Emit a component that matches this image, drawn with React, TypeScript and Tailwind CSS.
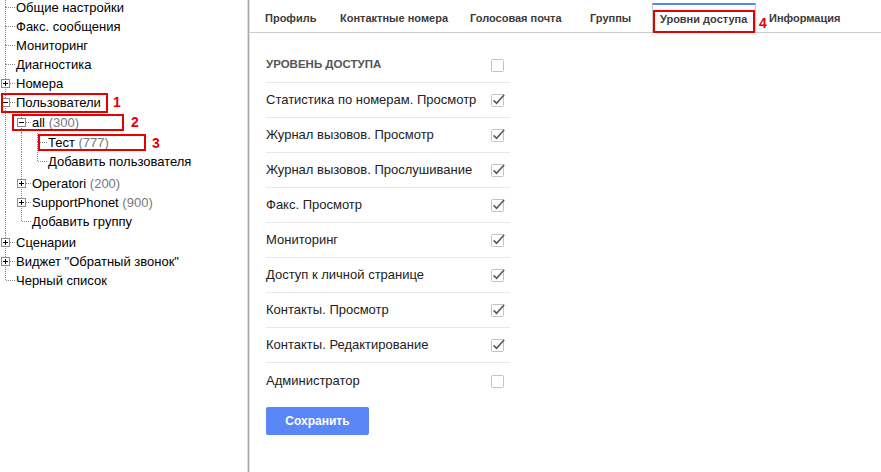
import React from 'react';

type Kind = 'leaf' | 'plus' | 'minus';

type Row = {
  label: string;
  count?: string;
  depth: number;
  kind: Kind;
  h: number;
  last?: boolean;
  guides: boolean[];
};

const rows: Row[] = [
  { label: 'Общие настройки', depth: 0, kind: 'leaf', h: 19, guides: [] },
  { label: 'Факс. сообщения', depth: 0, kind: 'leaf', h: 19, guides: [] },
  { label: 'Мониторинг', depth: 0, kind: 'leaf', h: 19, guides: [] },
  { label: 'Диагностика', depth: 0, kind: 'leaf', h: 19, guides: [] },
  { label: 'Номера', depth: 0, kind: 'plus', h: 19, guides: [] },
  { label: 'Пользователи', depth: 0, kind: 'minus', h: 20, guides: [] },
  { label: 'all', count: '(300)', depth: 1, kind: 'minus', h: 20, guides: [true] },
  { label: 'Тест', count: '(777)', depth: 2, kind: 'leaf', h: 19, guides: [true, true] },
  { label: 'Добавить пользователя', depth: 2, kind: 'leaf', h: 22, last: true, guides: [true, true] },
  { label: 'Operatori', count: '(200)', depth: 1, kind: 'plus', h: 19, guides: [true] },
  { label: 'SupportPhonet', count: '(900)', depth: 1, kind: 'plus', h: 19, guides: [true] },
  { label: 'Добавить группу', depth: 1, kind: 'leaf', h: 21, last: true, guides: [true] },
  { label: 'Сценарии', depth: 0, kind: 'plus', h: 19, guides: [] },
  { label: 'Виджет "Обратный звонок"', depth: 0, kind: 'plus', h: 19, guides: [] },
  { label: 'Черный список', depth: 0, kind: 'leaf', h: 19, last: true, guides: [] },
];

const DOT = '#8a8a8a';

const Guide = ({ h, on }: { h: number; on: boolean }) => (
  <svg width={16} height={h} className="shrink-0" shapeRendering="crispEdges">
    {on && <line x1={5.5} y1={0} x2={5.5} y2={h} stroke={DOT} strokeDasharray="1 1" />}
  </svg>
);

const Connector = ({ h, kind, last }: { h: number; kind: Kind; last?: boolean }) => {
  const c = 9;
  return (
    <svg width={16} height={h} className="shrink-0" shapeRendering="crispEdges">
      <line x1={5.5} y1={0} x2={5.5} y2={c} stroke={DOT} strokeDasharray="1 1" />
      {!last && <line x1={5.5} y1={c} x2={5.5} y2={h} stroke={DOT} strokeDasharray="1 1" />}
      <line x1={kind === 'leaf' ? 6 : 10} y1={c + 0.5} x2={16} y2={c + 0.5} stroke={DOT} strokeDasharray="1 1" />
      {kind !== 'leaf' && (
        <>
          <rect x={1.5} y={c - 3.5} width={8} height={8} fill="#fff" stroke="#8c8c8c" />
          <line x1={3} y1={c + 0.5} x2={8} y2={c + 0.5} stroke="#000" />
          {kind === 'plus' && <line x1={5.5} y1={c - 2} x2={5.5} y2={c + 3} stroke="#000" />}
        </>
      )}
    </svg>
  );
};

const Tree = () => (
  <div className="-mt-[2px]">
    {rows.map((r, i) => (
      <div key={i} className="flex items-start" style={{ height: r.h }}>
        {r.guides.map((g, j) => (
          <Guide key={j} h={r.h} on={g} />
        ))}
        <Connector h={r.h} kind={r.kind} last={r.last} />
        <span className="h-[19px] leading-[19px] text-[13px] text-black whitespace-nowrap">
          {r.label}
          {r.count && <span className="text-[#77777f]"> {r.count}</span>}
        </span>
      </div>
    ))}
  </div>
);

const Checkbox = ({ checked }: { checked: boolean }) => (
  <svg width={16} height={16} viewBox="0 0 16 16" className="shrink-0">
    <rect x={1.5} y={2.5} width={12} height={12} rx={1} fill="#fff" stroke="#c2c2c2" />
    {checked && (
      <path d="M3.6 8.4 L6.6 11.4 L14.2 2.8" fill="none" stroke="#5a5a5a" strokeWidth={1.6} />
    )}
  </svg>
);

const permissions: [string, boolean][] = [
  ['Статистика по номерам. Просмотр', true],
  ['Журнал вызовов. Просмотр', true],
  ['Журнал вызовов. Прослушивание', true],
  ['Факс. Просмотр', true],
  ['Мониторинг', true],
  ['Доступ к личной странице', true],
  ['Контакты. Просмотр', true],
  ['Контакты. Редактирование', true],
  ['Администратор', false],
];

const tabs = [
  { label: 'Профиль', w: 'w-[75px]' },
  { label: 'Контактные номера', w: 'w-[130px]' },
  { label: 'Голосовая почта', w: 'w-[120px]' },
  { label: 'Группы', w: 'w-[70px]' },
];

export default function App() {
  return (
    <div className="flex w-[881px] h-[472px] bg-white overflow-hidden font-['Liberation_Sans',Arial,sans-serif]">
      {/* left tree */}
      <div className="relative w-[247px] shrink-0">
        <Tree />
        <div className="absolute left-[1px] top-[93px] w-[107px] h-[20px] border-2 border-[#e60000]" />
        <span className="absolute left-[113px] top-[92px] text-[14px] font-bold text-[#e60000]">1</span>
        <div className="absolute left-[12px] top-[114px] w-[112px] h-[17px] border-2 border-[#e60000]" />
        <span className="absolute left-[131px] top-[112px] text-[14px] font-bold text-[#e60000]">2</span>
        <div className="absolute left-[38px] top-[134px] w-[108px] h-[17px] border-2 border-[#e60000]" />
        <span className="absolute left-[152px] top-[133px] text-[14px] font-bold text-[#e60000]">3</span>
      </div>

      {/* splitter */}
      <div className="w-[3px] shrink-0 bg-[#a9a9a9] border-x border-[#dedede]" />

      {/* right panel */}
      <div className="flex-1 flex flex-col">
        <div className="relative flex items-end h-[33px] pt-[3px] border-b border-[#cccccc]">
          <div className="w-[7px] shrink-0" />
          {tabs.map((t) => (
            <div key={t.label} className={`${t.w} h-[29px] flex items-center pt-[1px] pl-[8px] text-[11px] font-bold text-[#3c3c3c] whitespace-nowrap shrink-0`}>
              {t.label}
            </div>
          ))}
          <div className="relative w-[104px] h-[30px] -mb-[1px] bg-white border-t-2 border-x border-t-[#5b86f5] border-x-[#cccccc] flex items-center pl-[7px] text-[11px] font-bold text-[#3c3c3c] whitespace-nowrap shrink-0">
            <div className="absolute left-[0px] top-[5px] w-[102px] h-[23px] border-2 border-[#e60000]" />
            Уровни доступа
          </div>
          <span className="w-[13px] shrink-0 self-center mt-[12px] pl-[3px] text-[14px] font-bold text-[#e60000]">4</span>
          <div className="h-[29px] flex items-center pt-[1px] text-[11px] font-bold text-[#3c3c3c] whitespace-nowrap">
            Информация
          </div>
        </div>

        <div className="pl-[16px] pt-[15px]">
          <div className="w-[244px]">
            <div className="h-[35px] flex items-center justify-between pr-[4px] border-b border-[#e8e8e8]">
              <span className="text-[11.5px] font-bold text-[#555555]">УРОВЕНЬ ДОСТУПА</span>
              <Checkbox checked={false} />
            </div>
            {permissions.map(([label, checked], i) => (
              <div
                key={label}
                className={`h-[35px] flex items-center justify-between pr-[4px] ${i < permissions.length - 1 ? 'border-b border-[#e8e8e8]' : ''}`}
              >
                <span className="text-[13px] text-[#222222]">{label}</span>
                <Checkbox checked={checked} />
              </div>
            ))}
          </div>
          <button className="mt-[9px] w-[103px] h-[28px] rounded-[2px] bg-[#5b86f7] text-white text-[12px] font-bold">
            Сохранить
          </button>
        </div>
      </div>
    </div>
  );
}
